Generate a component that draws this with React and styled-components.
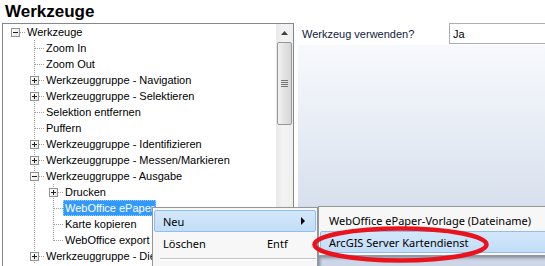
import React from "react"
import styled, { createGlobalStyle } from "styled-components"

const GlobalStyle = createGlobalStyle`
  html, body {
    margin: 0;
    padding: 0;
    background: #ffffff;
    overflow: hidden;
  }
  body {
    font-family: "Liberation Sans", Arial, sans-serif;
  }
`;

const Page = styled.div`
  position: relative;
  width: 545px;
  height: 266px;
  overflow: hidden;
`;

const Title = styled.div`
  height: 23px;
  line-height: 23px;
  padding-left: 5px;
  font-size: 17px;
  font-weight: bold;
  color: #000;
`;

const Main = styled.div`
  display: flex;
  gap: 4px;
  padding-left: 2px;
  height: 260px;
`;

// Tree view
const TreePanel = styled.div`
  display: flex;
  width: 290px;
  border: 1px solid #828790;
  background: #fff;
`;

const TreeBody = styled.div`
  flex: 1;
`;

const Row = styled.div`
  display: flex;
  align-items: stretch;
  height: 16px;
  padding-left: 3px;
  font-size: 11px;
  color: #000;
`;

const dotV = `repeating-linear-gradient(to bottom, #a0a0a0 0 1px, transparent 1px 2px)`;
const dotH = `repeating-linear-gradient(to right, #a0a0a0 0 1px, transparent 1px 2px)`;

const Cell = styled.span`
  position: relative;
  width: 19px;
  flex: none;
  display: flex;
  align-items: center;
  padding-left: 5px;
  box-sizing: border-box;

  &::before {
    content: "";
    display: ${({ $v }) => ($v === "none" ? "none" : "block")};
    position: absolute;
    left: 9px;
    top: 0;
    width: 1px;
    height: ${({ $v }) => ($v === "top" ? "9px" : "100%")};
    background: ${dotV};
  }

  &::after {
    content: "";
    display: ${({ $h }) => ($h ? "block" : "none")};
    position: absolute;
    left: 10px;
    right: 0;
    top: 8px;
    height: 1px;
    background: ${dotH};
  }
`;

const Expander = styled.span`
  position: relative;
  z-index: 1;
  width: 9px;
  height: 9px;
  box-sizing: border-box;
  border: 1px solid #919191;
  background: linear-gradient(to bottom right, #ffffff, #e6e6e6);
  margin-top: 1px;

  &::before {
    content: "";
    position: absolute;
    left: 1px;
    top: 3px;
    width: 5px;
    height: 1px;
    background: #1e1e1e;
  }

  &::after {
    content: "";
    display: ${({ $open }) => ($open ? "none" : "block")};
    position: absolute;
    left: 3px;
    top: 1px;
    width: 1px;
    height: 5px;
    background: #1e1e1e;
  }
`;

const Label = styled.span`
  display: flex;
  align-items: center;
  padding: 0 2px;
  white-space: nowrap;
  box-sizing: border-box;
  color: ${({ $selected }) => ($selected ? "#fff" : "#000")};
  background: ${({ $selected }) => ($selected ? "#3399ff" : "transparent")};
  outline: ${({ $selected }) => ($selected ? "1px dotted #99ccff" : "none")};
  outline-offset: -1px;
`;

const Scrollbar = styled.div`
  width: 17px;
  flex: none;
  display: flex;
  flex-direction: column;
  align-items: center;
  background: linear-gradient(to right, #e8e8e8, #f3f3f3 40%, #efefef);
`;

const ArrowButton = styled.div`
  height: 17px;
  width: 17px;
  display: flex;
  align-items: center;
  justify-content: center;
`;

const Thumb = styled.div`
  margin-top: 1px;
  width: 15px;
  height: 83px;
  box-sizing: border-box;
  border: 1px solid #979797;
  border-radius: 2px;
  background: linear-gradient(to right, #f2f2f2, #e2e2e2 50%, #d6d6d6);
  display: flex;
  flex-direction: column;
  align-items: center;
  justify-content: center;
  gap: 1px;
`;

const Grip = styled.span`
  width: 7px;
  height: 1px;
  background: #777;
`;

// Property panel
const PropPanel = styled.div`
  flex: 1;
  display: flex;
  flex-direction: column;
`;

const PropRow = styled.div`
  display: grid;
  grid-template-columns: 151px 1fr;
  height: 22px;
  background: #fff;
`;

const PropLabel = styled.span`
  display: flex;
  align-items: center;
  padding-left: 4px;
  font-size: 11px;
  color: #10203a;
`;

const TextBox = styled.div`
  height: 21px;
  box-sizing: border-box;
  border: 1px solid #abadb3;
  border-right: none;
  display: flex;
  align-items: center;
  padding-left: 3px;
  font-size: 11px;
  color: #000;
`;

const GradientArea = styled.div`
  flex: 1;
  background: linear-gradient(to bottom, #f7f9fc, #e5ebf4 40%, #c8d3e5);
`;

// Context menus
const Menu = styled.div`
  position: absolute;
  left: ${({ $x }) => $x}px;
  top: ${({ $y }) => $y}px;
  width: ${({ $w }) => $w}px;
  box-sizing: border-box;
  border: 1px solid #979797;
  background: #f7f7f7;
  padding: 2px 1px;
  box-shadow: 2px 2px 3px rgba(0, 0, 0, 0.35);
  font-family: "Noto Sans", "Open Sans", sans-serif;
  font-size: 11px;
  color: #000;
  z-index: 2;
`;

const MenuItem = styled.div`
  display: grid;
  grid-template-columns: ${({ $cols }) => $cols || "1fr"};
  align-items: center;
  height: 22px;
  box-sizing: border-box;
  padding-left: 8px;
  border: 1px solid ${({ $hot }) => ($hot ? "#8fbfee" : "transparent")};
  border-radius: 2px;
  background: ${({ $hot }) =>
    $hot ? "linear-gradient(to bottom, #d3e7fb, #c3ddf7)" : "transparent"};
  white-space: nowrap;
`;

const SubArrow = styled.span`
  width: 0;
  height: 0;
  border-top: 4px solid transparent;
  border-bottom: 4px solid transparent;
  border-left: 4px solid #000;
  justify-self: start;
`;

const Separator = styled.div`
  margin: 4px 0 0 6px;
  height: 1px;
  background: #c5c5c5;
  border-bottom: 1px solid #fff;
`;

const Marker = styled.svg`
  position: absolute;
  left: 310px;
  top: 224px;
  z-index: 3;
  overflow: visible;
`;

const rows = [
  { level: 0, text: "Werkzeuge", exp: "minus", root: true },
  { level: 1, text: "Zoom In" },
  { level: 1, text: "Zoom Out" },
  { level: 1, text: "Werkzeuggruppe - Navigation", exp: "plus" },
  { level: 1, text: "Werkzeuggruppe - Selektieren", exp: "plus" },
  { level: 1, text: "Selektion entfernen" },
  { level: 1, text: "Puffern" },
  { level: 1, text: "Werkzeuggruppe - Identifizieren", exp: "plus" },
  { level: 1, text: "Werkzeuggruppe - Messen/Markieren", exp: "plus" },
  { level: 1, text: "Werkzeuggruppe - Ausgabe", exp: "minus" },
  { level: 2, text: "Drucken", exp: "plus" },
  { level: 2, text: "WebOffice ePaper", selected: true },
  { level: 2, text: "Karte kopieren" },
  { level: 2, text: "WebOffice export", last: true },
  { level: 1, text: "Werkzeuggruppe - Dienste", exp: "plus" },
];

const TreeRow = ({ row }) => {
  const cells = [];
  for (let i = 0; i < row.level; i++) {
    // ancestors: only level 1 continues down here
    cells.push(<Cell key={i} $v={i === 1 ? "full" : "none"} />);
  }
  const own = row.root ? "none" : row.last ? "top" : "full";
  cells.push(
    <Cell key="own" $v={own} $h>
      {row.exp && <Expander $open={row.exp === "minus"} />}
    </Cell>
  );
  return (
    <Row>
      {cells}
      <Label $selected={row.selected}>{row.text}</Label>
    </Row>
  );
};

const App = () => {
  return (
    <Page>
      <GlobalStyle />
      <Title>Werkzeuge</Title>
      <Main>
        <TreePanel>
          <TreeBody>
            {rows.map((r, i) => (
              <TreeRow key={i} row={r} />
            ))}
          </TreeBody>
          <Scrollbar>
            <ArrowButton>
              <svg width="7" height="4" viewBox="0 0 7 4">
                <path d="M0 4 L3.5 0 L7 4 Z" fill="#404040" />
              </svg>
            </ArrowButton>
            <Thumb>
              <Grip />
              <Grip />
              <Grip />
              <Grip />
            </Thumb>
          </Scrollbar>
        </TreePanel>
        <PropPanel>
          <PropRow>
            <PropLabel>Werkzeug verwenden?</PropLabel>
            <TextBox>Ja</TextBox>
          </PropRow>
          <GradientArea />
        </PropPanel>
      </Main>

      <Menu $x={152} $y={207} $w={166}>
        <MenuItem $hot $cols="104px 1fr 14px">
          <span>Neu</span>
          <span />
          <SubArrow />
        </MenuItem>
        <MenuItem $cols="104px 1fr 14px">
          <span>Löschen</span>
          <span>Entf</span>
          <span />
        </MenuItem>
        <Separator />
        <MenuItem />
      </Menu>

      <Menu $x={318} $y={206} $w={240}>
        <MenuItem>WebOffice ePaper-Vorlage (Dateiname)</MenuItem>
        <MenuItem $hot>ArcGIS Server Kartendienst</MenuItem>
      </Menu>

      <Marker width="182" height="42" viewBox="0 0 182 42">
        <ellipse cx="90.5" cy="20.5" rx="86" ry="16" fill="none" stroke="#e8131c" strokeWidth="4.5" />
      </Marker>
    </Page>
  );
}

export default App
